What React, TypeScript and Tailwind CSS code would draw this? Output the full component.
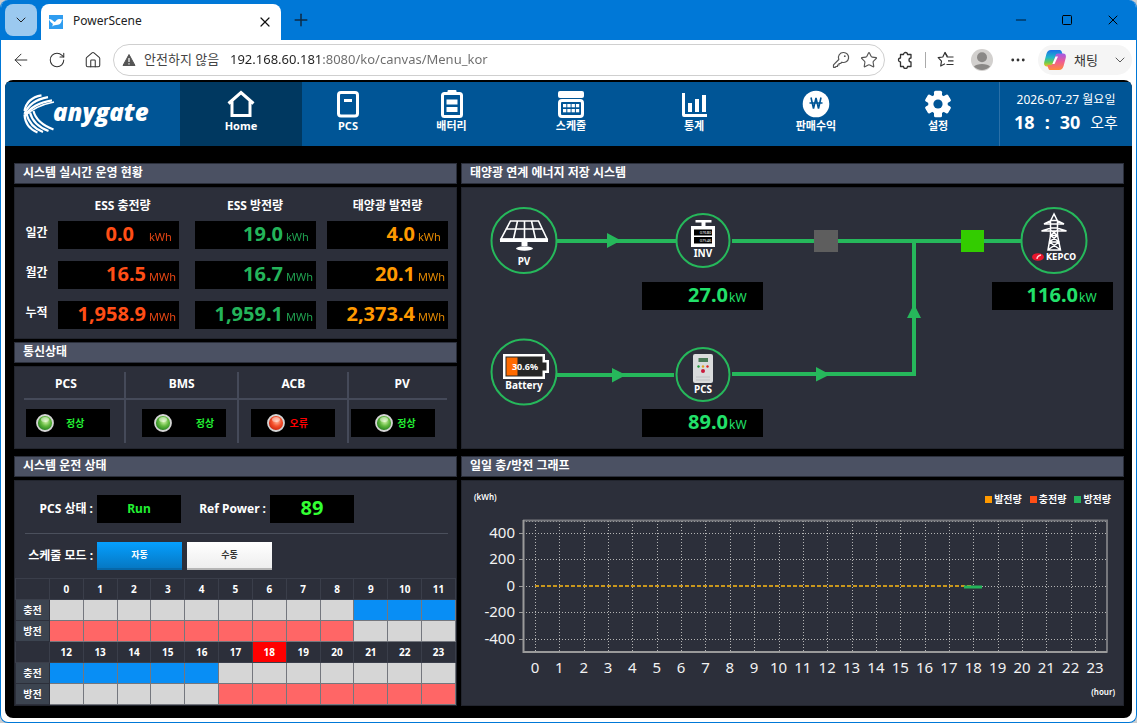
import type { ReactNode } from "react";
import { ArrowLeft, ChevronDown, Ellipsis, House, Minus, Plus, RotateCw, Square, Star, X } from "lucide-react";

const menu = [
  { label: "Home", icon: <HomeIcon />, active: true },
  { label: "PCS", icon: <PcsIcon /> },
  { label: "배터리", icon: <BatteryIcon /> },
  { label: "스케줄", icon: <CalendarIcon /> },
  { label: "통계", icon: <ChartIcon /> },
  { label: "판매수익", icon: <WonIcon /> },
  { label: "설정", icon: <GearIcon /> },
];

const totals = [
  {
    label: "일간",
    values: [
      { value: "0.0", unit: "kWh", color: "text-[#ff4e16]", pad: "pr-3" },
      { value: "19.0", unit: "kWh", color: "text-[#24b45a]" },
      { value: "4.0", unit: "kWh", color: "text-[#ff9900]" },
    ],
  },
  {
    label: "월간",
    values: [
      { value: "16.5", unit: "MWh", color: "text-[#ff4e16]" },
      { value: "16.7", unit: "MWh", color: "text-[#24b45a]" },
      { value: "20.1", unit: "MWh", color: "text-[#ff9900]" },
    ],
  },
  {
    label: "누적",
    values: [
      { value: "1,958.9", unit: "MWh", color: "text-[#ff4e16]" },
      { value: "1,959.1", unit: "MWh", color: "text-[#24b45a]" },
      { value: "2,373.4", unit: "MWh", color: "text-[#ff9900]" },
    ],
  },
];

const links = [
  { name: "PCS", ok: true, head: "pr-4", cell: "pl-0.5", box: "pl-2.5 gap-3" },
  { name: "BMS", ok: true, head: "", cell: "pl-4", box: "pl-3 gap-6" },
  { name: "ACB", ok: false, head: "", cell: "pl-3", box: "pl-4 gap-1" },
  { name: "PV", ok: true, head: "pl-2", cell: "pl-0.5 pt-3", box: "pl-6 gap-1" },
];

const schedule = [
  { start: 0, charge: [9, 10, 11], discharge: [0, 1, 2, 3, 4, 5, 6, 7, 8] },
  { start: 12, charge: [12, 13, 14, 15, 16], discharge: [17, 18, 19, 20, 21, 22, 23] },
];

const currentHour = 18;

const legend = [
  { label: "발전량", color: "bg-[#ff9900]" },
  { label: "충전량", color: "bg-[#ff4e16]" },
  { label: "방전량", color: "bg-[#24b45a]" },
];

const yTicks = [
  { label: "400", y: 26 },
  { label: "200", y: 52 },
  { label: "0", y: 79 },
  { label: "-200", y: 105 },
  { label: "-400", y: 132 },
];

export default function App() {
  return (
    <div className="min-h-screen bg-[#c8ccd0] font-['Noto_Sans','Noto_Sans_CJK_KR',sans-serif]">
      <div className="flex min-h-screen flex-col overflow-hidden rounded-lg border border-t-0 border-[#0078d7] bg-white">
        <TitleBar />
        <Toolbar />
        <main className="mx-1 mb-1 flex-1 overflow-hidden rounded-lg bg-black pt-0.5">
          <Menu />
          <div className="grid grid-cols-[443fr_663fr] gap-x-1 gap-y-[7px] pt-[17px] pr-2 pb-3 pl-[9px]">
            <div className="flex flex-col gap-[3px]">
              <Panel title="시스템 실시간 운영 현황">
                <Totals />
              </Panel>
              <Panel title="통신상태">
                <Links />
              </Panel>
            </div>
            <Panel title="태양광 연계 에너지 저장 시스템">
              <Diagram />
            </Panel>
            <Panel title="시스템 운전 상태">
              <Operation />
            </Panel>
            <Panel title="일일 충/방전 그래프">
              <Graph />
            </Panel>
          </div>
        </main>
      </div>
    </div>
  );
}

function TitleBar() {
  return (
    <header className="flex h-10 items-end bg-[#0078d7] pl-1">
      <button aria-label="Tab actions" className="mb-1 flex size-8 items-center justify-center rounded-lg bg-[#9bc9ef]">
        <ChevronDown className="size-4 text-[#222]" strokeWidth={1.5} />
      </button>
      <div className="ml-1 flex h-9 w-60 items-center rounded-t-lg bg-white pr-2 pl-2">
        <svg viewBox="0 0 14 14" className="size-3.5">
          <rect width="14" height="14" fill="#2f9df0" />
          <path d="M0 4c3 0 4 2.500 6 3C7 5 9 3.500 11 4c1 .3 2 .2 3 0-1 1-1.500 1.500-1.500 2.500C12 9 9.500 10 7 10c-2 0-2.500 1-4 1.500C4 10 4 9.500 3.500 8.500 2 8 .5 6 0 4z" fill="#fff" />
        </svg>
        <span className="ml-2.5 flex-1 pb-0.5 text-[12px] text-[#222]">PowerScene</span>
        <button aria-label="Close tab">
          <X className="size-4 text-[#111]" strokeWidth={1.8} />
        </button>
      </div>
      <button aria-label="New tab" className="mb-2.5 ml-2.5">
        <Plus className="size-5 text-[#0d2a45]" strokeWidth={1.8} />
      </button>
      <div className="ml-auto flex h-10 items-center text-black">
        <button aria-label="Minimize" className="flex w-[46px] justify-center">
          <Minus className="size-4" strokeWidth={1.2} />
        </button>
        <button aria-label="Maximize" className="flex w-[46px] justify-center">
          <Square className="size-3" strokeWidth={2} />
        </button>
        <button aria-label="Close" className="flex w-[46px] justify-center">
          <X className="size-4" strokeWidth={1.5} />
        </button>
      </div>
    </header>
  );
}

function Toolbar() {
  return (
    <div className="flex h-10 items-center pr-1 pl-0.5 text-[#333]">
      <button aria-label="Back" className="flex w-9 justify-center">
        <ArrowLeft className="size-5" strokeWidth={1.2} />
      </button>
      <button aria-label="Refresh" className="flex w-9 justify-center">
        <RotateCw className="size-[18px]" strokeWidth={1.4} />
      </button>
      <button aria-label="Home" className="flex w-9 justify-center">
        <House className="size-[18px]" strokeWidth={1.4} />
      </button>
      <div className="ml-0.5 flex h-8 flex-1 items-center rounded-full border border-[#cfcfcf] pr-px pl-2">
        <svg viewBox="0 0 14 14" className="size-3.5">
          <path d="M7 1.500 13 12.500H1z" fill="#555" stroke="#555" strokeLinejoin="round" />
          <path d="M7 5v4M7 10.300v1.300" stroke="#fff" strokeWidth="1.200" />
        </svg>
        <label htmlFor="address" className="ml-2 w-[86px] text-[13px] whitespace-nowrap text-[#444]">안전하지 않음</label>
        <input
          id="address"
          type="text"
          defaultValue="192.168.60.181:8080/ko/canvas/Menu_kor"
          className="min-w-0 flex-1 bg-[linear-gradient(90deg,#222_93px,#6b6b6b_93px)] bg-clip-text text-[13px] text-transparent outline-none"
        />
        <button aria-label="Password" className="flex w-7 justify-center">
          <svg viewBox="0 0 18 18" className="size-[18px]" fill="none" stroke="#555" strokeWidth="1.200" strokeLinejoin="round">
            <path d="M11.500 1.500a5 5 0 1 1-1.600 9.700L8.500 12.500H7V14H5.500v1.500H4l-.8.800H1.500v-2.500l5.300-5.300A5 5 0 0 1 11.500 1.500z" />
            <circle cx="12.800" cy="5.200" r=".9" fill="#555" stroke="none" />
          </svg>
        </button>
        <button aria-label="Favorite" className="flex w-7 justify-center text-[#555]">
          <Star className="size-[18px]" strokeWidth={1.5} />
        </button>
      </div>
      <button aria-label="Extensions" className="ml-0.5 flex w-9 justify-center">
        <svg viewBox="0 0 18 18" className="size-[18px]" fill="none" stroke="#333" strokeWidth="1.300" strokeLinejoin="round">
          <path d="M4.500 3.500h3a2 2 0 1 1 4 0h3.500v3.500a2 2 0 0 0 0 4v4.500h-3.500a2 2 0 1 1-4 0h-3v-4.500a2 2 0 1 1 0-4z" />
        </svg>
      </button>
      <span className="mx-0.5 h-4 w-px bg-[#aaa]" />
      <button aria-label="Favorites" className="flex w-9 justify-center">
        <svg viewBox="0 0 18 18" className="size-[18px]" fill="none" stroke="#333" strokeWidth="1.200" strokeLinejoin="round">
          <path d="M10.500 5.500 8 1.500 5.800 6l-4.600.7 3.300 3.400-.8 4.900L8 12.700" />
          <path d="M8 1.500 10.200 6h6.300M11 9.800h5.500M9.500 13.500h7" />
        </svg>
      </button>
      <button aria-label="Profile" className="flex w-9 justify-center">
        <svg viewBox="0 0 22 22" className="size-[22px]">
          <circle cx="11" cy="11" r="11" fill="#d2d0ce" />
          <circle cx="11" cy="8.300" r="5" fill="#8a8886" />
          <path d="M3 17.500c2-3.500 14-3.500 16 0A11 11 0 0 1 3 17.500z" fill="#8a8886" />
        </svg>
      </button>
      <button aria-label="Settings and more" className="flex w-9 justify-center">
        <Ellipsis className="size-[18px]" strokeWidth={1.8} />
      </button>
      <button className="ml-0.5 flex h-[30px] items-center rounded-full bg-[#f5f5f5] pr-1 pl-1.5 text-[13px]">
        <CopilotIcon />
        <span className="mr-3.5 ml-2 leading-5">채팅</span>
        <ChevronDown className="size-4" strokeWidth={1.2} />
      </button>
    </div>
  );
}

function CopilotIcon() {
  return (
    <svg viewBox="0 0 22 20" className="h-5 w-[22px]">
      <defs>
        <linearGradient id="cpA" x1="0" y1="0" x2="0" y2="1">
          <stop offset="0" stopColor="#1a6fe8" />
          <stop offset=".45" stopColor="#1fb6c9" />
          <stop offset=".75" stopColor="#6ccb4f" />
          <stop offset="1" stopColor="#f3c11b" />
        </linearGradient>
        <linearGradient id="cpB" x1="0.300" y1="0" x2="0.300" y2="1">
          <stop offset="0" stopColor="#a05ae8" />
          <stop offset=".5" stopColor="#ef5c93" />
          <stop offset="1" stopColor="#ff8a3c" />
        </linearGradient>
      </defs>
      <path d="M15.500 0c1.500 0 2 1 2.500 2.600L18.700 5h-3c-1.600 0-2.500 1-3 2.600l-2 6.400c-.6 1.700-1 2.500-2.700 2.500H3C0 16.500-.3 14 .4 11.500l2-7.500C3.200 1.300 4.500 0 7 0z" fill="url(#cpA)" />
      <path d="M6.500 20c-1.500 0-2-1-2.500-2.600L3.300 15h3c1.600 0 2.500-1 3-2.600l2-6.400c.6-1.700 1-2.500 2.700-2.500h5c3 0 3.300 2.500 2.600 5l-2 7.500C18.800 18.700 17.500 20 15 20z" fill="url(#cpB)" />
      <path d="m11.500 6.500 2.500 0-3.500 7.500H8.300z" fill="#fff" />
    </svg>
  );
}

function Menu() {
  return (
    <nav className="grid h-16 grid-cols-[175fr_122fr_92fr_115fr_124fr_122fr_122fr_122fr_133fr] bg-[#005596] text-white">
      <div className="flex items-center pl-[18px]">
        <svg viewBox="0 0 32 40" className="h-10 w-8 shrink-0" fill="none" stroke="#fff" strokeWidth="2.200">
          <path d="M1.500 17C3 8 9 3 18.500 1.300" />
          <path d="M1.500 20C5 11 12 5.500 25 3.200" />
          <path d="M2 21.500C7 13.500 15 8.500 29 6.300" />
          <path d="M2 22C9 15 17 10.800 31 8" strokeWidth="1.400" />
          <path d="M1.500 20.500C2 29 7 35.500 14.500 38.500" />
          <path d="M3.500 20C5.500 28 11 34.500 20 38" />
          <path d="M7 18.500C9 26.500 15 33 25.500 37" />
          <path d="M10.500 17C12.500 25 20 31.500 30.500 35.500" />
        </svg>
        <span className="-ml-0.5 pb-1 font-['Open_Sans'] text-[24px] leading-8 font-extrabold italic">anygate</span>
      </div>
      {menu.map((item) => (
        <a key={item.label} href="#" className={`flex flex-col items-center pt-2 ${item.active ? "bg-[#003860]" : ""}`}>
          {item.icon}
          <span className="text-[11px] leading-4 font-bold">{item.label}</span>
        </a>
      ))}
      <div className="flex flex-col items-center border-l border-[#2a70a8] pt-2 whitespace-nowrap">
        <span className="text-[12px] leading-5">2026-07-27 월요일</span>
        <span className="flex items-center gap-2.5 text-[18px] leading-6 font-bold">
          <span>18</span>
          <span>:</span>
          <span>30</span>
          <span className="text-[15px] font-normal">오후</span>
        </span>
      </div>
    </nav>
  );
}

function HomeIcon() {
  return (
    <svg viewBox="0 0 28 28" className="size-7" fill="none" stroke="#fff" strokeWidth="3">
      <path d="M1.500 13.500 14 2.500l12.500 11M5 11.500v14h18v-14" />
    </svg>
  );
}

function PcsIcon() {
  return (
    <svg viewBox="0 0 28 28" className="size-7" fill="none" stroke="#fff" strokeWidth="3">
      <rect x="4.500" y="2.500" width="19" height="23.500" rx="2.500" />
      <path d="M10 10.500h8" />
    </svg>
  );
}

function BatteryIcon() {
  return (
    <svg viewBox="0 0 28 28" className="size-7" fill="#fff">
      <rect x="9.500" y="0" width="9" height="4" rx="1" />
      <rect x="4.500" y="3.500" width="19" height="23" rx="2" fill="none" stroke="#fff" strokeWidth="3" />
      <rect x="8.500" y="9.500" width="11" height="5" />
      <rect x="8.500" y="17" width="11" height="5" />
    </svg>
  );
}

function CalendarIcon() {
  return (
    <svg viewBox="0 0 28 28" className="size-7" fill="#fff">
      <rect x="1" y="1" width="26" height="7" rx="2" />
      <rect x="2.500" y="10.500" width="23" height="16" rx="2.500" fill="none" stroke="#fff" strokeWidth="3" />
      {[0, 1, 2, 3].map((col) => (
        <g key={col}>
          <rect x={6 + col * 4.3} y="14" width="3.300" height="3.300" />
          <rect x={6 + col * 4.3} y="19" width="3.300" height="3.300" />
        </g>
      ))}
    </svg>
  );
}

function ChartIcon() {
  return (
    <svg viewBox="0 0 28 28" className="size-7" fill="#fff">
      <path d="M2 3h3v21h22v3H4a2 2 0 0 1-2-2zM8 13h4v9H8zM15 9h4v13h-4zM22 5h4v17h-4z" />
    </svg>
  );
}

function WonIcon() {
  return (
    <svg viewBox="0 0 28 28" className="size-7">
      <circle cx="14" cy="14" r="13.300" fill="#fff" />
      <path d="m9 7.500 2.500 11L14 8l2.500 10.500L19 7.500M7.500 13h13" fill="none" stroke="#005596" strokeWidth="1.600" />
    </svg>
  );
}

function GearIcon() {
  return (
    <svg viewBox="0 0 28 28" className="size-7">
      <g fill="#fff">
        {[0, 60, 120].map((deg) => (
          <rect key={deg} x="10" y=".8" width="8" height="26.400" rx="1.500" transform={`rotate(${deg} 14 14)`} />
        ))}
        <circle cx="14" cy="14" r="9.800" />
      </g>
      <circle cx="14" cy="14" r="4.600" fill="#005596" />
    </svg>
  );
}

function Panel({ title, children }: { title: string; children: ReactNode }) {
  return (
    <section className="flex flex-auto flex-col gap-[3px]">
      <h2 className="h-[21px] border border-[#2b2f3b] bg-[#4b5163] pl-2 text-[12px] leading-[18px] font-bold text-white">{title}</h2>
      <div className="flex-1 border border-[#22252e] bg-[#2c2f3a] text-white">{children}</div>
    </section>
  );
}

function Readout({ value, unit, color, pad = "" }: { value: string; unit: string; color: string; pad?: string }) {
  return (
    <div className={`flex h-7 items-baseline overflow-hidden bg-black ${color}`}>
      <span className={`w-[88px] shrink-0 text-right text-[20px] leading-[26px] font-bold ${pad}`}>{value}</span>
      <span className="ml-[3px] text-[11px] opacity-90">{unit}</span>
    </div>
  );
}

function PowerReadout({ value }: { value: string }) {
  return (
    <div className="flex h-7 w-[121px] items-baseline overflow-hidden bg-black text-[#22e06a]">
      <span className="w-[86px] text-right text-[20px] leading-[26px] font-bold">{value}</span>
      <span className="ml-px text-[12px]">kW</span>
    </div>
  );
}

function Totals() {
  return (
    <table className="mb-[3px] w-full table-fixed text-[12px] leading-4">
      <colgroup>
        <col className="w-[43px]" />
        <col className="w-[137px]" />
        <col className="w-[132px]" />
        <col />
      </colgroup>
      <thead>
        <tr className="h-[27px]">
          <th></th>
          <th className="pt-2 pr-2">ESS 충전량</th>
          <th className="pt-2 pr-3">ESS 방전량</th>
          <th className="pt-2 pr-2">태양광 발전량</th>
        </tr>
      </thead>
      <tbody>
        {totals.map((row) => (
          <tr key={row.label} className="h-10">
            <th scope="row" className="pb-1">{row.label}</th>
            <td className="pr-4">
              <Readout {...row.values[0]} />
            </td>
            <td className="pr-[11px]">
              <Readout {...row.values[1]} />
            </td>
            <td className="pr-2">
              <Readout {...row.values[2]} />
            </td>
          </tr>
        ))}
      </tbody>
    </table>
  );
}

function Links() {
  return (
    <div className="grid h-[81px] grid-cols-[102fr_114fr_110fr_98fr] px-[9px] py-[5px]">
      {links.map((link) => (
        <div key={link.name} className="flex flex-col border-r-2 border-[#454a59] last:border-r-0">
          <h3 className={`h-7 border-b-2 border-[#454a59] text-center text-[12px] leading-6 font-bold ${link.head}`}>{link.name}</h3>
          <div className={`pt-[9px] ${link.cell}`}>
            <div className={`flex h-7 w-[84px] items-center bg-black ${link.box}`}>
              <Lamp ok={link.ok} />
              <span className={`text-[10px] leading-4 font-bold ${link.ok ? "text-[#22ee33]" : "text-[#ff0000]"}`}>{link.ok ? "정상" : "오류"}</span>
            </div>
          </div>
        </div>
      ))}
    </div>
  );
}

function Lamp({ ok }: { ok: boolean }) {
  const id = ok ? "lampOk" : "lampError";
  return (
    <svg viewBox="0 0 18 18" className="size-[18px] shrink-0">
      <defs>
        <radialGradient id={id} cx=".55" cy=".4" r=".6">
          <stop offset="0" stopColor={ok ? "#d6f5b0" : "#ffb9a0"} />
          <stop offset=".5" stopColor={ok ? "#62b83e" : "#f4502c"} />
          <stop offset="1" stopColor={ok ? "#1d7a1c" : "#c41f0a"} />
        </radialGradient>
      </defs>
      <circle cx="9" cy="9" r="8" fill={`url(#${id})`} stroke="#d5d5d5" strokeWidth="1.800" />
      <ellipse cx="9" cy="5.500" rx="4" ry="2.500" fill="#fff" opacity=".45" />
    </svg>
  );
}

function Diagram() {
  return (
    <div className="relative mx-auto h-[260px] w-[661px]">
      <svg viewBox="1 1 661 260" className="h-[260px] w-[661px] font-bold" fill="#fff" textAnchor="middle" fontSize="10">
        <g fill="none" stroke="#26b85b" strokeWidth="4">
          <path d="M95 54h121M271 54h290M95 188h118M271 187h184M453 54v135" />
        </g>
        <g fill="#26b85b">
          <path d="m146 46 14 7.500-14 7.500zM151 181l14 7-14 7.500zM355 180l14 7.500-14 7zM446 131l7-14 7 14z" />
        </g>
        <rect x="353" y="43" width="24" height="22" fill="#5e5e5e" />
        <rect x="500" y="43" width="23" height="22" fill="#33cc00" />
        <g fill="#2c2f3a" stroke="#26b85b" strokeWidth="2">
          <circle cx="63" cy="53.500" r="32.500" />
          <circle cx="242" cy="53.500" r="26.500" />
          <circle cx="593" cy="53.500" r="32.500" />
          <circle cx="63" cy="185" r="32.500" />
          <circle cx="242" cy="187.500" r="26.500" />
        </g>

        {/* solar panel */}
        <path d="M49.500 34h28l8.500 18H40zM44.500 42h37M56.500 34l-4 18M63.500 34v18M70.500 34l4 18" fill="none" stroke="#fff" strokeWidth="1.600" />
        <path d="M39 51.500h48V55H39zM60.500 55h6v4h-6z" />
        <ellipse cx="63.500" cy="61.500" rx="8.500" ry="2.200" />
        <text x="63" y="78">PV</text>

        {/* inverter */}
        <path d="M234.500 33h16v2.500h-6V39h-4v-3.500h-6zM230 39h24v21h-24z" />
        <path d="M233 42.500h18v6h-18zM233 50h18v6.500h-18z" fill="#000" />
        <text x="244.500" y="47.300" fontSize="4" fontWeight="400">07680</text>
        <text x="244.500" y="55" fontSize="4" fontWeight="400">07546</text>
        <text x="242" y="70">INV</text>

        {/* battery with charge level */}
        <path d="M42 167h42v6h4v13h-4v6H42z" />
        <path d="M44.500 169.500h37v6h4v8h-4v6h-37z" fill="#262626" />
        <path d="M45.500 170.500h11v18h-11z" fill="#ff6a00" />
        <text x="64" y="182.500" fontSize="9">30.6%</text>
        <text x="63" y="202">Battery</text>

        {/* PCS cabinet */}
        <rect x="232" y="167" width="20" height="29" rx="2" fill="#d9dbdc" />
        <path d="M237.500 171h9.500v4h-9.500z" fill="#4a7b58" />
        <circle cx="237.500" cy="179.500" r="1.200" fill="#1f9a3b" />
        <circle cx="242" cy="179.500" r="1.200" fill="#e0a020" />
        <circle cx="246.500" cy="179.500" r="1.200" fill="#d22" />
        <circle cx="242" cy="184" r="2" fill="#c8193b" />
        <path d="M235 190h14M235 193h14" stroke="#bfc2c4" />
        <text x="242" y="206">PCS</text>

        {/* transmission tower */}
        <path
          d="M593 27l-3.500 7v14.500L587 63h12.500L596.500 48.500V34zM583 37l7-3.500h6l7 3.500zM580.500 44l9.500-3h6l9.500 3zM589.500 43l7 5.500-8 6.500 10.500 7.500M596.500 43l-7 5.500 8.500 6.500-10.500 7.500M589.500 48.500h7M588.500 55h9.500"
          fill="none"
          stroke="#fff"
          strokeWidth="1.500"
        />
        <ellipse cx="577" cy="70" rx="6" ry="3.800" fill="#e8142c" />
        <path d="M576 72q0-3 4-4" stroke="#ffc9cf" strokeWidth="1.400" fill="none" />
        <text x="600" y="73" fontSize="8" fontFamily="DejaVu Sans">KEPCO</text>
      </svg>
      <div className="absolute top-[94px] left-[180px]">
        <PowerReadout value="27.0" />
      </div>
      <div className="absolute top-[94px] left-[530px]">
        <PowerReadout value="116.0" />
      </div>
      <div className="absolute top-[221px] left-[180px]">
        <PowerReadout value="89.0" />
      </div>
    </div>
  );
}

function Operation() {
  return (
    <>
      <div className="flex h-[52px] items-center pt-1 text-[12px] font-bold">
        <span className="w-[82px] pr-1 text-right">PCS 상태 :</span>
        <output className="h-7 w-[84px] bg-black text-center leading-7 text-[#22ee33]">Run</output>
        <span className="w-[89px] pr-1 text-right">Ref Power :</span>
        <output className="h-7 w-[84px] bg-black text-center text-[20px] leading-[26px] text-[#33ff33]">89</output>
      </div>
      <hr className="mr-2 ml-2.5 border-[#4b505c]" />
      <div className="flex items-center pt-2 pb-2 text-[12px] font-bold">
        <span className="w-[82px] pr-1 text-right">스케줄 모드 :</span>
        <button className="h-7 w-[85px] border-b-2 border-[#0668aa] bg-linear-to-b from-[#05a0ff] to-[#0678c4] text-[9px]">자동</button>
        <button className="ml-[5px] h-7 w-[85px] border-b-2 border-[#b5b5b5] bg-linear-to-b from-white to-[#eeeeee] text-[9px] text-[#333]">수동</button>
      </div>
      <table className="w-full table-fixed border-collapse text-center text-[10px]">
        {schedule.map((half) => {
          const hours = Array.from({ length: 12 }, (_, i) => half.start + i);
          return (
            <tbody key={half.start}>
              <tr className="h-[21px]">
                <th className="border border-[#3a3e4a]"></th>
                {hours.map((hour) => (
                  <th key={hour} scope="col" className={`border border-[#3a3e4a] leading-4 ${hour === currentHour ? "bg-[#ff0000]" : ""}`}>
                    {hour}
                  </th>
                ))}
              </tr>
              <tr className="h-[21px]">
                <th scope="row" className="border border-[#2c2f3a] bg-[#3c4450] leading-4">충전</th>
                {hours.map((hour) => (
                  <td key={hour} className={`border border-[#74777e] ${half.charge.includes(hour) ? "bg-[#088ef5]" : "bg-[#d6d6d6]"}`}></td>
                ))}
              </tr>
              <tr className="h-[21px]">
                <th scope="row" className="border border-[#2c2f3a] bg-[#3c4450] leading-4">방전</th>
                {hours.map((hour) => (
                  <td key={hour} className={`border border-[#74777e] ${half.discharge.includes(hour) ? "bg-[#ff6666]" : "bg-[#d6d6d6]"}`}></td>
                ))}
              </tr>
            </tbody>
          );
        })}
      </table>
    </>
  );
}

function Graph() {
  return (
    <>
      <div className="flex items-start justify-between pt-2.5 pr-3 pl-3">
        <span className="text-[8px] leading-3 font-semibold">(kWh)</span>
        <ul className="flex gap-2 text-[10px] leading-4 font-bold">
          {legend.map((item) => (
            <li key={item.label} className="flex items-center gap-0.5">
              <span className={`size-[7px] ${item.color}`} />
              {item.label}
            </li>
          ))}
        </ul>
      </div>
      <svg viewBox="1 0 661 173" className="block w-full" fill="#f2f2f2" fontSize="15">
        <g stroke="#b4b4b4" strokeDasharray="1 2">
          <path d="M62 14.500h584" />
          {yTicks.map((tick) => (
            <path key={tick.label} d={`M62 ${tick.y + 0.5}h584`} />
          ))}
          {Array.from({ length: 24 }, (_, hour) => (
            <path key={hour} d={`M${Math.round(74 + hour * 24.35) + 0.5} 14v130`} />
          ))}
        </g>
        <path d="M62 13.500h584v131" fill="none" stroke="#77787d" strokeWidth="2" />
        <path d="M62.500 13v132h584" fill="none" stroke="#9a9a9a" strokeWidth="2" />
        {yTicks.map((tick) => (
          <g key={tick.label}>
            <path d={`M58 ${tick.y + 0.5}h4`} stroke="#9a9a9a" />
            <text x="54" y={tick.y + 5} textAnchor="end">
              {tick.label}
            </text>
          </g>
        ))}
        {Array.from({ length: 24 }, (_, hour) => (
          <text key={hour} x={74 + hour * 24.35} y="166" textAnchor="middle">
            {hour}
          </text>
        ))}
        <path d="M74 79h437" stroke="#c9971c" strokeWidth="2" strokeDasharray="4 2" />
        <path d="M503 80h18" stroke="#24b45a" strokeWidth="3" />
      </svg>
      <p className="pt-1.5 pr-2 text-right text-[8px] leading-3 font-semibold">(hour)</p>
    </>
  );
}
